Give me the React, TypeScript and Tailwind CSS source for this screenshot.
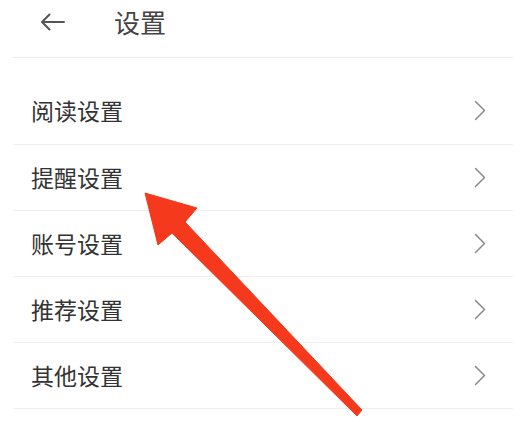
import React from "react";

const items = ["阅读设置", "提醒设置", "账号设置", "推荐设置", "其他设置"];

function Chevron() {
  return (
    <svg width="12" height="21" viewBox="0 0 12 21" fill="none">
      <path d="M1.5 1.5 L10.5 10.5 L1.5 19.5" stroke="#8a8a8a" strokeWidth="1.5" strokeLinecap="round" strokeLinejoin="round" />
    </svg>
  );
}

export default function App() {
  return (
    <div
      className="relative w-[522px] h-[424px] bg-white overflow-hidden"
      style={{ fontFamily: '"Noto Sans CJK SC", "Noto Sans", sans-serif' }}
    >
      <div className="h-[58px] flex items-center ml-[13px] mr-[9px] border-b border-[#ececec]">
        <svg className="ml-[28px] mt-[-14px]" width="24" height="18" viewBox="0 0 24 18" fill="none">
          <path d="M1 9 H23 M8.5 1.5 L1 9 L8.5 16.5" stroke="#555" strokeWidth="2" strokeLinecap="round" strokeLinejoin="round" />
        </svg>
        <span className="ml-[49px] mt-[-14px] text-[26px] leading-none text-[#444]">设置</span>
      </div>
      <div className="pt-[21px] ml-[13px] mr-[9px]">
        {items.map((t, i) => (
          <div
            key={t}
            className="h-[66px] flex items-center justify-between pl-[18px] pr-[27px] border-b border-[#efefef]"
          >
            <span className={`text-[23px] leading-none text-[#333] ${i === 0 ? "mt-[-3px]" : "mt-0"}`}>{t}</span>
            <span className={i === 0 ? "mt-[-3px]" : "mt-0"}>
              <Chevron />
            </span>
          </div>
        ))}
      </div>
      <svg className="absolute left-0 top-0 pointer-events-none" width="522" height="424" viewBox="0 0 522 424">
        <polygon
          points="145,193 197,208 185,222 362,410 357,416 172,233 158,245"
          fill="#f4391c"
          stroke="#f4391c"
          strokeWidth="1"
          strokeLinejoin="round"
        />
      </svg>
    </div>
  );
}
